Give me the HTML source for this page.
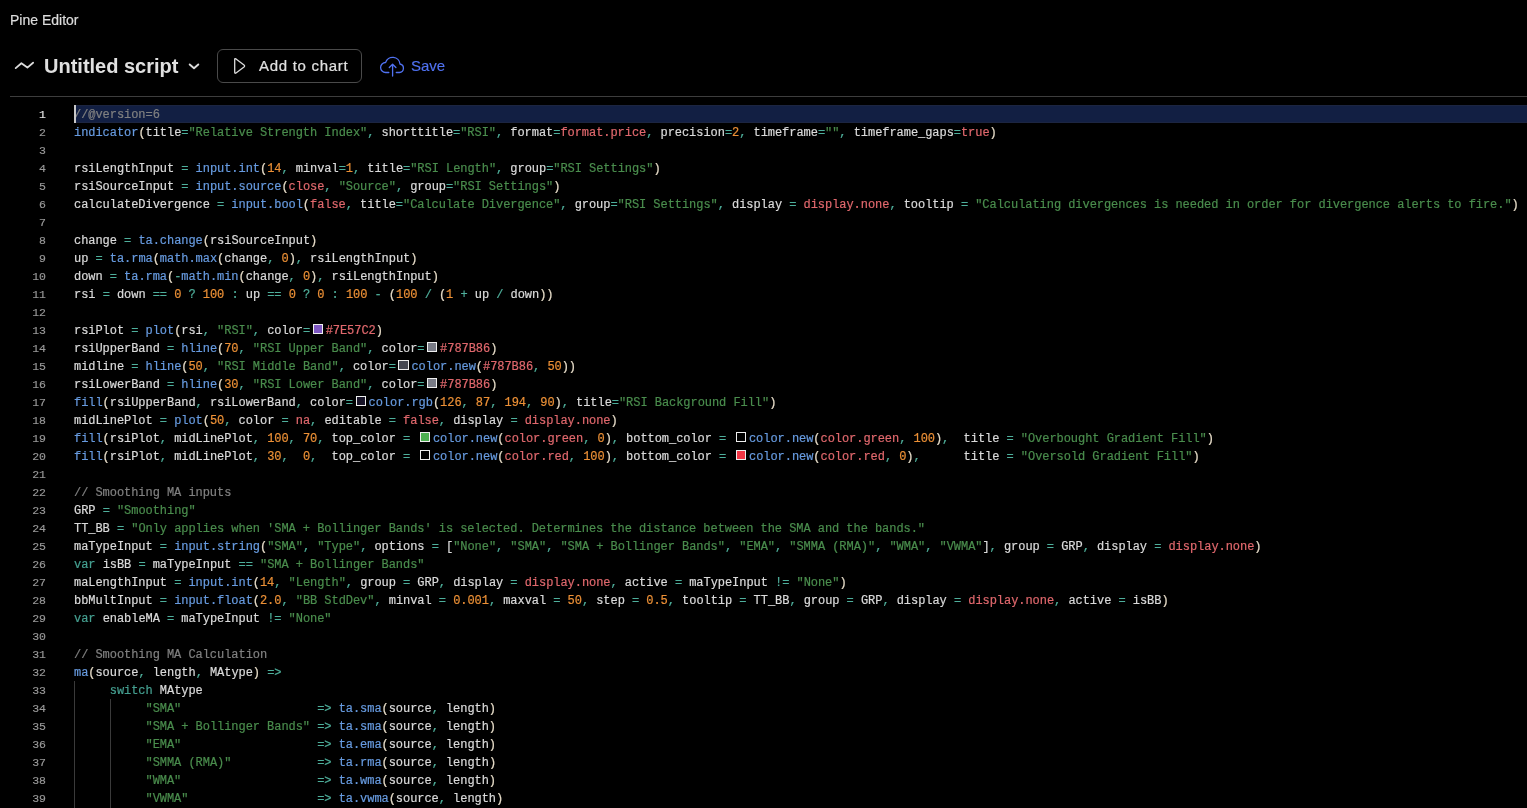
<!DOCTYPE html>
<html><head><meta charset="utf-8">
<style>
html,body{margin:0;padding:0;background:#000;width:1527px;height:808px;overflow:hidden}
body{position:relative;will-change:transform;font-family:"Liberation Sans",sans-serif;color:#d1d4dc}
.title{position:absolute;left:10px;top:12px;-webkit-text-stroke:0.2px currentColor;font-size:14px;line-height:16px;color:#dcdcdc;white-space:nowrap}
.wave{position:absolute;left:13px;top:58px}
.script{position:absolute;left:44px;top:54px;font-size:20px;line-height:24px;font-weight:bold;color:#e0e0e0;white-space:nowrap}
.chev{position:absolute;left:186px;top:60px}
.btn{position:absolute;left:217px;top:49px;width:143px;height:32px;border:1px solid #4a4a4a;border-radius:6px;box-sizing:content-box}
.play{position:absolute;left:231px;top:56px}
.btntxt{position:absolute;left:259px;top:57px;font-size:15px;line-height:18px;letter-spacing:0.7px;-webkit-text-stroke:0.2px currentColor;color:#e0e0e0;white-space:nowrap}
.cloud{position:absolute;left:374px;top:50px}
.save{position:absolute;left:411px;top:57px;-webkit-text-stroke:0.15px currentColor;font-size:15px;line-height:18px;color:#5072f2;white-space:nowrap}
.sep{position:absolute;left:10px;top:96px;width:1517px;height:1px;background:#3d3d3d}
.hl{position:absolute;left:74px;top:105px;width:1453px;height:16px;background:#121f43;border-top:1px solid #1c2541;border-bottom:1px solid #1c2541}
.cursor{position:absolute;left:74px;top:105px;width:2px;height:18px;background:#c8c8c8}
.nums{position:absolute;left:0;top:106px;width:46px;font-family:"Liberation Mono",monospace;font-size:11.5px;line-height:18px;text-align:right;color:#9a9a9a;-webkit-text-stroke:0.15px currentColor}
.nums .act{color:#e6e6e6}
.code{position:absolute;left:74px;top:106px;font-family:"Liberation Mono",monospace;font-size:12px;letter-spacing:-0.05px;line-height:18px;-webkit-text-stroke:0.2px currentColor}
.ln{height:18px;white-space:pre}
.code i{font-style:normal}
.sw{display:inline-block;box-sizing:border-box;width:10.4px;height:10.4px;border:1.3px solid #eee;margin:0 2.6px 0 2.6px;vertical-align:0px}
.guide{position:absolute;width:1px;background:#3a3a3a}
.id{color:#dadada}
.fn{color:#679be0}
.st{color:#4a8d4d}
.nu{color:#ec9036}
.op{color:#4fb09c}
.kw{color:#45a091}
.bi{color:#e0686d}
.cm{color:#808080}
.pa{color:#e6dcc8}
.br{color:#dadada}
</style></head><body>
<div class="title">Pine Editor</div>
<svg class="wave" width="22" height="14" viewBox="0 0 22 14"><path d="M2.7 10.1 L8.4 5.2 L14.4 9.6 L20.1 4.7" fill="none" stroke="#dcdcdc" stroke-width="1.8" stroke-linecap="round" stroke-linejoin="round"/></svg>
<div class="script">Untitled script</div>
<svg class="chev" width="16" height="12" viewBox="0 0 16 12"><path d="M3.7 4.5 L8 8.3 L12.3 4.5" fill="none" stroke="#dcdcdc" stroke-width="1.9" stroke-linecap="round" stroke-linejoin="round"/></svg>
<div class="btn"></div>
<svg class="play" width="16" height="20" viewBox="0 0 16 20"><path d="M3.7 3.6 Q3.7 2 5 2.9 L13 8.9 Q14.2 9.9 13 10.9 L5 16.9 Q3.7 17.8 3.7 16.3 Z" fill="none" stroke="#dcdcdc" stroke-width="1.3" stroke-linejoin="round"/></svg>
<div class="btntxt">Add to chart</div>
<svg class="cloud" width="36" height="30" viewBox="0 0 36 30"><path d="M14.8 22.5 H11.6 A5 5 0 0 1 11.6 12.5 A7.4 7.4 0 0 1 26.0 14.0 A4.3 4.3 0 0 1 25.4 22.5 H22.3" fill="none" stroke="#5072f2" stroke-width="1.3" stroke-linecap="round" stroke-linejoin="round"/><path d="M18.6 26 V14.3 M15.3 17.5 L18.6 14.2 L21.9 17.5" fill="none" stroke="#5072f2" stroke-width="1.3" stroke-linecap="round" stroke-linejoin="round"/></svg>
<div class="save">Save</div>
<div class="sep"></div>
<div class="hl"></div>
<div class="nums">
<div class="n act">1</div>
<div class="n">2</div>
<div class="n">3</div>
<div class="n">4</div>
<div class="n">5</div>
<div class="n">6</div>
<div class="n">7</div>
<div class="n">8</div>
<div class="n">9</div>
<div class="n">10</div>
<div class="n">11</div>
<div class="n">12</div>
<div class="n">13</div>
<div class="n">14</div>
<div class="n">15</div>
<div class="n">16</div>
<div class="n">17</div>
<div class="n">18</div>
<div class="n">19</div>
<div class="n">20</div>
<div class="n">21</div>
<div class="n">22</div>
<div class="n">23</div>
<div class="n">24</div>
<div class="n">25</div>
<div class="n">26</div>
<div class="n">27</div>
<div class="n">28</div>
<div class="n">29</div>
<div class="n">30</div>
<div class="n">31</div>
<div class="n">32</div>
<div class="n">33</div>
<div class="n">34</div>
<div class="n">35</div>
<div class="n">36</div>
<div class="n">37</div>
<div class="n">38</div>
<div class="n">39</div>
</div>
<div class="guide" style="left:74px;top:681px;height:127px"></div>
<div class="guide" style="left:110px;top:699px;height:109px"></div>
<div class="code">
<div class="ln"><i class="cm">//@version=6</i></div>
<div class="ln"><i class="fn">indicator</i><i class="pa">(</i><i class="id">title</i><i class="op">=</i><i class="st">"Relative Strength Index"</i><i class="op">,</i> <i class="id">shorttitle</i><i class="op">=</i><i class="st">"RSI"</i><i class="op">,</i> <i class="id">format</i><i class="op">=</i><i class="bi">format.price</i><i class="op">,</i> <i class="id">precision</i><i class="op">=</i><i class="nu">2</i><i class="op">,</i> <i class="id">timeframe</i><i class="op">=</i><i class="st">""</i><i class="op">,</i> <i class="id">timeframe_gaps</i><i class="op">=</i><i class="bi">true</i><i class="pa">)</i></div>
<div class="ln"></div>
<div class="ln"><i class="id">rsiLengthInput</i> <i class="op">=</i> <i class="fn">input.int</i><i class="pa">(</i><i class="nu">14</i><i class="op">,</i> <i class="id">minval</i><i class="op">=</i><i class="nu">1</i><i class="op">,</i> <i class="id">title</i><i class="op">=</i><i class="st">"RSI Length"</i><i class="op">,</i> <i class="id">group</i><i class="op">=</i><i class="st">"RSI Settings"</i><i class="pa">)</i></div>
<div class="ln"><i class="id">rsiSourceInput</i> <i class="op">=</i> <i class="fn">input.source</i><i class="pa">(</i><i class="bi">close</i><i class="op">,</i> <i class="st">"Source"</i><i class="op">,</i> <i class="id">group</i><i class="op">=</i><i class="st">"RSI Settings"</i><i class="pa">)</i></div>
<div class="ln"><i class="id">calculateDivergence</i> <i class="op">=</i> <i class="fn">input.bool</i><i class="pa">(</i><i class="bi">false</i><i class="op">,</i> <i class="id">title</i><i class="op">=</i><i class="st">"Calculate Divergence"</i><i class="op">,</i> <i class="id">group</i><i class="op">=</i><i class="st">"RSI Settings"</i><i class="op">,</i> <i class="id">display</i> <i class="op">=</i> <i class="bi">display.none</i><i class="op">,</i> <i class="id">tooltip</i> <i class="op">=</i> <i class="st">"Calculating divergences is needed in order for divergence alerts to fire."</i><i class="pa">)</i></div>
<div class="ln"></div>
<div class="ln"><i class="id">change</i> <i class="op">=</i> <i class="fn">ta.change</i><i class="pa">(</i><i class="id">rsiSourceInput</i><i class="pa">)</i></div>
<div class="ln"><i class="id">up</i> <i class="op">=</i> <i class="fn">ta.rma</i><i class="pa">(</i><i class="fn">math.max</i><i class="pa">(</i><i class="id">change</i><i class="op">,</i> <i class="nu">0</i><i class="pa">)</i><i class="op">,</i> <i class="id">rsiLengthInput</i><i class="pa">)</i></div>
<div class="ln"><i class="id">down</i> <i class="op">=</i> <i class="fn">ta.rma</i><i class="pa">(</i><i class="op">-</i><i class="fn">math.min</i><i class="pa">(</i><i class="id">change</i><i class="op">,</i> <i class="nu">0</i><i class="pa">)</i><i class="op">,</i> <i class="id">rsiLengthInput</i><i class="pa">)</i></div>
<div class="ln"><i class="id">rsi</i> <i class="op">=</i> <i class="id">down</i> <i class="op">==</i> <i class="nu">0</i> <i class="op">?</i> <i class="nu">100</i> <i class="op">:</i> <i class="id">up</i> <i class="op">==</i> <i class="nu">0</i> <i class="op">?</i> <i class="nu">0</i> <i class="op">:</i> <i class="nu">100</i> <i class="op">-</i> <i class="pa">(</i><i class="nu">100</i> <i class="op">/</i> <i class="pa">(</i><i class="nu">1</i> <i class="op">+</i> <i class="id">up</i> <i class="op">/</i> <i class="id">down</i><i class="pa">)</i><i class="pa">)</i></div>
<div class="ln"></div>
<div class="ln"><i class="id">rsiPlot</i> <i class="op">=</i> <i class="fn">plot</i><i class="pa">(</i><i class="id">rsi</i><i class="op">,</i> <i class="st">"RSI"</i><i class="op">,</i> <i class="id">color</i><i class="op">=</i><b class="sw" style="background:#7E57C2"></b><i class="bi">#7E57C2</i><i class="pa">)</i></div>
<div class="ln"><i class="id">rsiUpperBand</i> <i class="op">=</i> <i class="fn">hline</i><i class="pa">(</i><i class="nu">70</i><i class="op">,</i> <i class="st">"RSI Upper Band"</i><i class="op">,</i> <i class="id">color</i><i class="op">=</i><b class="sw" style="background:#787B86"></b><i class="bi">#787B86</i><i class="pa">)</i></div>
<div class="ln"><i class="id">midline</i> <i class="op">=</i> <i class="fn">hline</i><i class="pa">(</i><i class="nu">50</i><i class="op">,</i> <i class="st">"RSI Middle Band"</i><i class="op">,</i> <i class="id">color</i><i class="op">=</i><b class="sw" style="background:#464852"></b><i class="fn">color.new</i><i class="pa">(</i><i class="bi">#787B86</i><i class="op">,</i> <i class="nu">50</i><i class="pa">)</i><i class="pa">)</i></div>
<div class="ln"><i class="id">rsiLowerBand</i> <i class="op">=</i> <i class="fn">hline</i><i class="pa">(</i><i class="nu">30</i><i class="op">,</i> <i class="st">"RSI Lower Band"</i><i class="op">,</i> <i class="id">color</i><i class="op">=</i><b class="sw" style="background:#787B86"></b><i class="bi">#787B86</i><i class="pa">)</i></div>
<div class="ln"><i class="fn">fill</i><i class="pa">(</i><i class="id">rsiUpperBand</i><i class="op">,</i> <i class="id">rsiLowerBand</i><i class="op">,</i> <i class="id">color</i><i class="op">=</i><b class="sw" style="background:#181428"></b><i class="fn">color.rgb</i><i class="pa">(</i><i class="nu">126</i><i class="op">,</i> <i class="nu">87</i><i class="op">,</i> <i class="nu">194</i><i class="op">,</i> <i class="nu">90</i><i class="pa">)</i><i class="op">,</i> <i class="id">title</i><i class="op">=</i><i class="st">"RSI Background Fill"</i><i class="pa">)</i></div>
<div class="ln"><i class="id">midLinePlot</i> <i class="op">=</i> <i class="fn">plot</i><i class="pa">(</i><i class="nu">50</i><i class="op">,</i> <i class="id">color</i> <i class="op">=</i> <i class="bi">na</i><i class="op">,</i> <i class="id">editable</i> <i class="op">=</i> <i class="bi">false</i><i class="op">,</i> <i class="id">display</i> <i class="op">=</i> <i class="bi">display.none</i><i class="pa">)</i></div>
<div class="ln"><i class="fn">fill</i><i class="pa">(</i><i class="id">rsiPlot</i><i class="op">,</i> <i class="id">midLinePlot</i><i class="op">,</i> <i class="nu">100</i><i class="op">,</i> <i class="nu">70</i><i class="op">,</i> <i class="id">top_color</i> <i class="op">=</i> <b class="sw" style="background:#4CAF50"></b><i class="fn">color.new</i><i class="pa">(</i><i class="bi">color.green</i><i class="op">,</i> <i class="nu">0</i><i class="pa">)</i><i class="op">,</i> <i class="id">bottom_color</i> <i class="op">=</i> <b class="sw" style="background:#000000"></b><i class="fn">color.new</i><i class="pa">(</i><i class="bi">color.green</i><i class="op">,</i> <i class="nu">100</i><i class="pa">)</i><i class="op">,</i>  <i class="id">title</i> <i class="op">=</i> <i class="st">"Overbought Gradient Fill"</i><i class="pa">)</i></div>
<div class="ln"><i class="fn">fill</i><i class="pa">(</i><i class="id">rsiPlot</i><i class="op">,</i> <i class="id">midLinePlot</i><i class="op">,</i> <i class="nu">30</i><i class="op">,</i>  <i class="nu">0</i><i class="op">,</i>  <i class="id">top_color</i> <i class="op">=</i> <b class="sw" style="background:#000000"></b><i class="fn">color.new</i><i class="pa">(</i><i class="bi">color.red</i><i class="op">,</i> <i class="nu">100</i><i class="pa">)</i><i class="op">,</i> <i class="id">bottom_color</i> <i class="op">=</i> <b class="sw" style="background:#F23645"></b><i class="fn">color.new</i><i class="pa">(</i><i class="bi">color.red</i><i class="op">,</i> <i class="nu">0</i><i class="pa">)</i><i class="op">,</i>      <i class="id">title</i> <i class="op">=</i> <i class="st">"Oversold Gradient Fill"</i><i class="pa">)</i></div>
<div class="ln"></div>
<div class="ln"><i class="cm">// Smoothing MA inputs</i></div>
<div class="ln"><i class="id">GRP</i> <i class="op">=</i> <i class="st">"Smoothing"</i></div>
<div class="ln"><i class="id">TT_BB</i> <i class="op">=</i> <i class="st">"Only applies when 'SMA + Bollinger Bands' is selected. Determines the distance between the SMA and the bands."</i></div>
<div class="ln"><i class="id">maTypeInput</i> <i class="op">=</i> <i class="fn">input.string</i><i class="pa">(</i><i class="st">"SMA"</i><i class="op">,</i> <i class="st">"Type"</i><i class="op">,</i> <i class="id">options</i> <i class="op">=</i> <i class="br">[</i><i class="st">"None"</i><i class="op">,</i> <i class="st">"SMA"</i><i class="op">,</i> <i class="st">"SMA + Bollinger Bands"</i><i class="op">,</i> <i class="st">"EMA"</i><i class="op">,</i> <i class="st">"SMMA (RMA)"</i><i class="op">,</i> <i class="st">"WMA"</i><i class="op">,</i> <i class="st">"VWMA"</i><i class="br">]</i><i class="op">,</i> <i class="id">group</i> <i class="op">=</i> <i class="id">GRP</i><i class="op">,</i> <i class="id">display</i> <i class="op">=</i> <i class="bi">display.none</i><i class="pa">)</i></div>
<div class="ln"><i class="kw">var</i> <i class="id">isBB</i> <i class="op">=</i> <i class="id">maTypeInput</i> <i class="op">==</i> <i class="st">"SMA + Bollinger Bands"</i></div>
<div class="ln"><i class="id">maLengthInput</i> <i class="op">=</i> <i class="fn">input.int</i><i class="pa">(</i><i class="nu">14</i><i class="op">,</i> <i class="st">"Length"</i><i class="op">,</i> <i class="id">group</i> <i class="op">=</i> <i class="id">GRP</i><i class="op">,</i> <i class="id">display</i> <i class="op">=</i> <i class="bi">display.none</i><i class="op">,</i> <i class="id">active</i> <i class="op">=</i> <i class="id">maTypeInput</i> <i class="op">!=</i> <i class="st">"None"</i><i class="pa">)</i></div>
<div class="ln"><i class="id">bbMultInput</i> <i class="op">=</i> <i class="fn">input.float</i><i class="pa">(</i><i class="nu">2.0</i><i class="op">,</i> <i class="st">"BB StdDev"</i><i class="op">,</i> <i class="id">minval</i> <i class="op">=</i> <i class="nu">0.001</i><i class="op">,</i> <i class="id">maxval</i> <i class="op">=</i> <i class="nu">50</i><i class="op">,</i> <i class="id">step</i> <i class="op">=</i> <i class="nu">0.5</i><i class="op">,</i> <i class="id">tooltip</i> <i class="op">=</i> <i class="id">TT_BB</i><i class="op">,</i> <i class="id">group</i> <i class="op">=</i> <i class="id">GRP</i><i class="op">,</i> <i class="id">display</i> <i class="op">=</i> <i class="bi">display.none</i><i class="op">,</i> <i class="id">active</i> <i class="op">=</i> <i class="id">isBB</i><i class="pa">)</i></div>
<div class="ln"><i class="kw">var</i> <i class="id">enableMA</i> <i class="op">=</i> <i class="id">maTypeInput</i> <i class="op">!=</i> <i class="st">"None"</i></div>
<div class="ln"></div>
<div class="ln"><i class="cm">// Smoothing MA Calculation</i></div>
<div class="ln"><i class="fn">ma</i><i class="pa">(</i><i class="id">source</i><i class="op">,</i> <i class="id">length</i><i class="op">,</i> <i class="id">MAtype</i><i class="pa">)</i> <i class="op">=&gt;</i></div>
<div class="ln">     <i class="kw">switch</i> <i class="id">MAtype</i></div>
<div class="ln">          <i class="st">"SMA"</i>                   <i class="op">=&gt;</i> <i class="fn">ta.sma</i><i class="pa">(</i><i class="id">source</i><i class="op">,</i> <i class="id">length</i><i class="pa">)</i></div>
<div class="ln">          <i class="st">"SMA + Bollinger Bands"</i> <i class="op">=&gt;</i> <i class="fn">ta.sma</i><i class="pa">(</i><i class="id">source</i><i class="op">,</i> <i class="id">length</i><i class="pa">)</i></div>
<div class="ln">          <i class="st">"EMA"</i>                   <i class="op">=&gt;</i> <i class="fn">ta.ema</i><i class="pa">(</i><i class="id">source</i><i class="op">,</i> <i class="id">length</i><i class="pa">)</i></div>
<div class="ln">          <i class="st">"SMMA (RMA)"</i>            <i class="op">=&gt;</i> <i class="fn">ta.rma</i><i class="pa">(</i><i class="id">source</i><i class="op">,</i> <i class="id">length</i><i class="pa">)</i></div>
<div class="ln">          <i class="st">"WMA"</i>                   <i class="op">=&gt;</i> <i class="fn">ta.wma</i><i class="pa">(</i><i class="id">source</i><i class="op">,</i> <i class="id">length</i><i class="pa">)</i></div>
<div class="ln">          <i class="st">"VWMA"</i>                  <i class="op">=&gt;</i> <i class="fn">ta.vwma</i><i class="pa">(</i><i class="id">source</i><i class="op">,</i> <i class="id">length</i><i class="pa">)</i></div>
</div>
<div class="cursor"></div>
</body></html>
